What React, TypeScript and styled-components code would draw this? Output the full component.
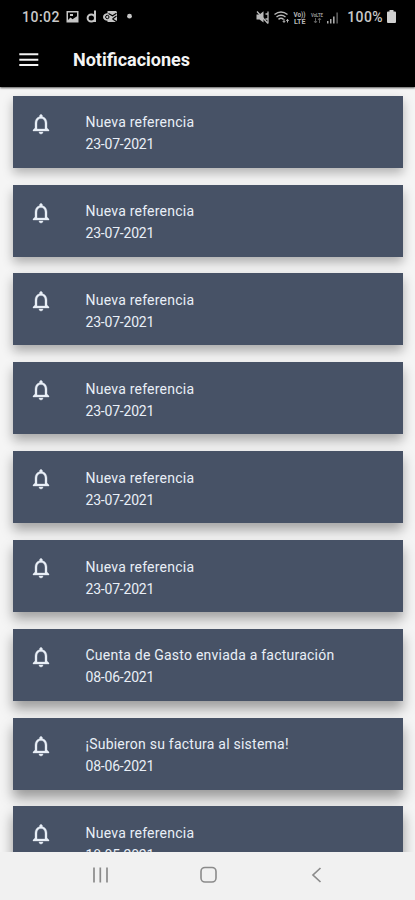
import React from 'react';
import styled, { createGlobalStyle } from 'styled-components';

const GlobalStyle = createGlobalStyle`
  * { box-sizing: border-box; }
  body { margin: 0; background: #f1f1f1; font-family: Roboto, sans-serif; }
`;

const Screen = styled.div`
  width: 415px;
  height: 900px;
  display: flex;
  flex-direction: column;
  overflow: hidden;
  background: #f5f5f5;
`;

const StatusBar = styled.div`
  flex: none;
  height: 32px;
  padding: 1px 19.5px 0 22px;
  display: flex;
  align-items: center;
  justify-content: space-between;
  background: #000;
  color: #c9c9c9;
`;

const StatusText = styled.span`
  font-size: 14px;
  line-height: 16px;
  font-weight: 500;
  letter-spacing: 0.5px;
`;

const StatusGroup = styled.div`
  display: flex;
  align-items: center;
`;

const AppBar = styled.header`
  flex: none;
  height: 55px;
  padding-left: 17px;
  display: flex;
  align-items: center;
  gap: 32px;
  background: #000;
  color: #f4f4f4;
  box-shadow: 0 1px 2px rgba(0, 0, 0, 0.65);
  z-index: 1;
`;

const Title = styled.h1`
  margin: 0;
  font-size: 18px;
  line-height: 24px;
  font-weight: 700;
`;

const List = styled.main`
  flex: none;
  height: 765px;
  padding: 8.7px 12px 0 13px;
  display: flex;
  flex-direction: column;
  gap: 16.85px;
  overflow: hidden;
`;

const Card = styled.article<{ $depth: number }>`
  flex: none;
  height: 72px;
  padding: 15px 16px 0;
  display: flex;
  gap: 32.5px;
  background: #475266;
  color: #e9eff7;
  box-shadow: 0 ${(p) => 5 + p.$depth * 0.5}px ${(p) => 10 + p.$depth * 0.3}px
    rgba(0, 0, 0, ${(p) => 0.28 + p.$depth * 0.014});
`;

const CardText = styled.div`
  padding-top: 0.6px;
  font-size: 14px;
  line-height: 22px;
`;

const CardTitle = styled.div`
  letter-spacing: 0.23px;
`;

const CardDate = styled.div`
  letter-spacing: -0.2px;
`;

const NavBar = styled.nav`
  flex: none;
  height: 48px;
  display: flex;
  justify-content: center;
  align-items: center;
  gap: 84px;
  padding: 0 0 2px 3px;
  background: #f1f1f1;
`;

const BellIcon = styled.svg`
  flex: none;
  width: 24px;
  height: 24px;
  margin-top: 1px;
`;

const Bell = () => (
  <BellIcon viewBox="0 0 24 24" fill="currentColor" stroke="currentColor" strokeWidth="0.35">
    <path d="M12 22c1.100 0 2-.9 2-2h-4c0 1.100.9 2 2 2zm6-6v-5c0-3.070-1.630-5.640-4.500-6.320V4c0-.83-.67-1.500-1.500-1.500s-1.500.67-1.500 1.500v.68C7.640 5.360 6 7.920 6 11v5l-2 2v1h16v-1l-2-2zm-2 1H8v-6c0-2.480 1.510-4.500 4-4.500s4 2.020 4 4.500v6z" />
  </BellIcon>
);

const LeftIcons = () => (
  <svg width="70" height="16" viewBox="64 9 70 16" fill="#c6c6c6">
    <path fillRule="evenodd" d="M67.500 11h12v11.500h-12zM69 12.500v7.500l2.500-2.500 2 1.800 4.500-3v-3.800zM71 14h3v2h-3z" />
    <path fill="none" stroke="#c6c6c6" strokeWidth="2" d="M96 10.500V22M96 18a3.700 3.500 0 1 0-7.400 0a3.700 3.500 0 1 0 7.400 0" />
    <path d="M108.500 11h8.500l1 1v8.500l-2 1.500h-7.500z" />
    <ellipse cx="108.500" cy="17" rx="4.500" ry="3.800" />
    <path fill="none" stroke="#000" strokeWidth="1.100" d="M109.500 13.500l4 2.300 4-2.600M113.500 19l4 2.500M113.500 19l4-3" />
    <circle cx="108.300" cy="17" r="1.700" fill="none" stroke="#000" strokeWidth="1" />
    <circle cx="130.500" cy="16.200" r="2.400" />
  </svg>
);

const RightIcons = () => (
  <svg width="86" height="18" viewBox="254 7 86 18" fill="#b9b9b9">
    <path d="M255.500 13.500h3l4-3.200v11.200l-4-3h-3z" />
    <path fill="none" stroke="#b9b9b9" strokeWidth="1.300" d="M256 10.500l11 12M264.500 13h2.500M264.500 18h2.500M267 10.500v12" />
    <g fill="none" stroke="#b9b9b9" strokeWidth="1.500">
      <path d="M273.500 13.500q6.500-4.800 13 0M275.500 16q4.500-3.300 9 0M277.500 18.300q2.500-2 5 0" />
      <path d="M283 18v3M281.800 20l1.200 1.500 1.200-1.500M286.500 21.500v-3M285.300 19.800l1.200-1.500 1.200 1.500" strokeWidth="1" />
    </g>
    <g fontFamily="Roboto, sans-serif" fontWeight="700">
      <text x="292.500" y="16" fontSize="6.500" textLength="12" lengthAdjust="spacingAndGlyphs">Vo))</text>
      <text x="293" y="22.500" fontSize="7" textLength="11.500" lengthAdjust="spacingAndGlyphs">LTE</text>
      <text x="310" y="15.500" fontSize="5.500" fill="#999" textLength="12" lengthAdjust="spacingAndGlyphs">VoLTE</text>
    </g>
    <path fill="none" stroke="#606060" strokeWidth="1" d="M314.500 17v5M313 20l1.500 2 1.500-2M318.500 22v-5M317 19l1.500-2 1.500 2" />
    <path fill="#aaa" d="M326 20h1.500v2.500H326zM329 18h1.500v4.500H329zM332 15.500h1.600v7H332z" />
    <path fill="#555" d="M335.300 11.500h1.700v11h-1.700z" />
  </svg>
);

const PercentText = styled(StatusText)`
  margin-left: 6px;
  letter-spacing: 0.4px;
`;

const LeftIconSlot = styled.div`
  display: flex;
  margin-left: 3px;
`;

const BatterySlot = styled.div`
  display: flex;
  margin-left: 3.5px;
`;

const items = [
  ...Array.from({ length: 6 }, () => ({ title: 'Nueva referencia', date: '23-07-2021' })),
  { title: 'Cuenta de Gasto enviada a facturación', date: '08-06-2021' },
  { title: '¡Subieron su factura al sistema!', date: '08-06-2021' },
  { title: 'Nueva referencia', date: '18-05-2021' },
];

export default function App() {
  return (
    <>
      <GlobalStyle />
      <Screen>
        <StatusBar>
          <StatusGroup>
            <StatusText>10:02</StatusText>
            <LeftIconSlot><LeftIcons /></LeftIconSlot>
          </StatusGroup>
          <StatusGroup>
            <RightIcons />
            <PercentText>100%</PercentText>
            <BatterySlot>
              <svg width="9" height="13" viewBox="0 0 9 13" fill="#d0d0d0">
                <path d="M2.500 0h4v1.500H8q1 0 1 1V12q0 1-1 1H1q-1 0-1-1V2.500q0-1 1-1h1.500z" />
              </svg>
            </BatterySlot>
          </StatusGroup>
        </StatusBar>
        <AppBar>
          <svg width="24" height="24" viewBox="0 0 24 24" fill="currentColor">
            <path d="M2.300 5.300h19v2h-19zM2.300 10.700h19v2h-19zM2.300 16h19v2h-19z" />
          </svg>
          <Title>Notificaciones</Title>
        </AppBar>
        <List>
          {items.map((item, i) => (
            <Card key={i} $depth={i}>
              <Bell />
              <CardText>
                <CardTitle>{item.title}</CardTitle>
                <CardDate>{item.date}</CardDate>
              </CardText>
            </Card>
          ))}
        </List>
        <NavBar>
          <svg width="24" height="24" viewBox="0 0 24 24" fill="none" stroke="#8b8b8b" strokeWidth="1.700">
            <path d="M5 4.500v15M11.300 4.500v15M18 4.500v15" />
          </svg>
          <svg width="24" height="24" viewBox="0 0 24 24" fill="none" stroke="#8b8b8b" strokeWidth="1.600">
            <rect x="4" y="4.500" width="15" height="14.500" rx="4" />
          </svg>
          <svg width="24" height="24" viewBox="0 0 24 24" fill="none" stroke="#8b8b8b" strokeWidth="1.700">
            <path d="M15.500 5L8 12l7.500 7" />
          </svg>
        </NavBar>
      </Screen>
    </>
  );
}
